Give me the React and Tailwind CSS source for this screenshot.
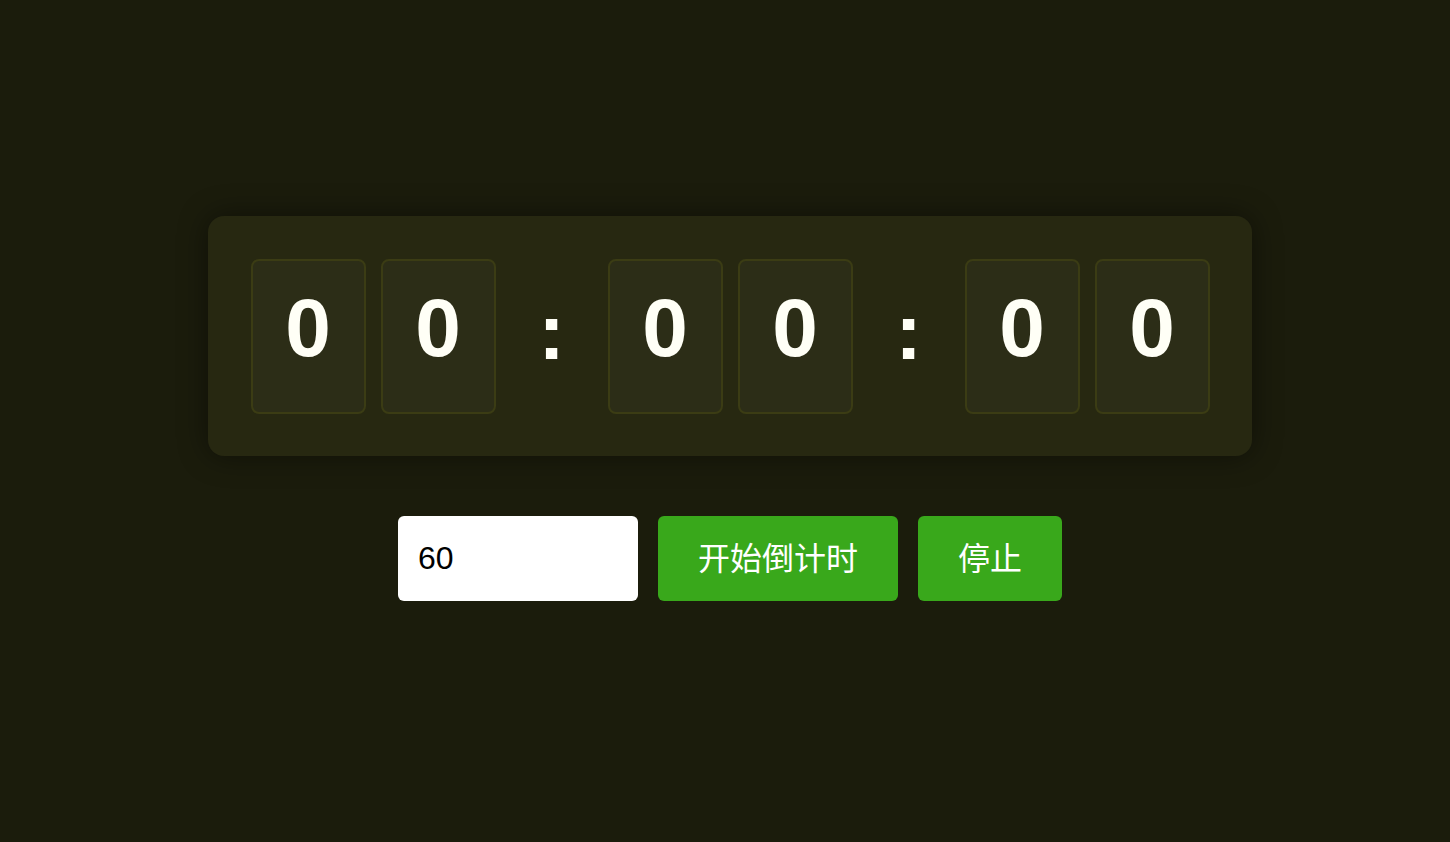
import React, { useState } from "react";

const Card = ({ value }) => (
  <div className="w-[115px] h-[155px] rounded-lg border-2 border-[#3b3c14] bg-[#2c2d17] flex items-center justify-center">
    <span className="text-[82px] font-bold leading-none text-[#fffff6] -mt-4">{value}</span>
  </div>
);

const Colon = () => (
  <div className="w-[82px] flex items-center justify-center">
    <span className="text-[80px] font-bold leading-none text-[#fffff6] -mt-2">:</span>
  </div>
);

const App = () => {
  const [seconds, setSeconds] = useState("60");
  const digits = ["0", "0", "0", "0", "0", "0"];

  return (
    <div
      className="w-full h-screen bg-[#1b1c0c] flex flex-col items-center pt-[216px] pl-[10px]"
      style={{ fontFamily: '"Liberation Sans", Arial, "Noto Sans CJK SC", sans-serif' }}
    >
      <div className="w-[1044px] h-[240px] rounded-2xl bg-[#272811] shadow-[0_0_30px_rgba(0,0,0,0.45)] flex items-center justify-center gap-[15px]">
        <Card value={digits[0]} />
        <Card value={digits[1]} />
        <Colon />
        <Card value={digits[2]} />
        <Card value={digits[3]} />
        <Colon />
        <Card value={digits[4]} />
        <Card value={digits[5]} />
      </div>

      <div className="flex gap-5 mt-[60px]">
        <input
          type="text"
          value={seconds}
          onChange={(e) => setSeconds(e.target.value)}
          className="w-[240px] h-[85px] rounded-md bg-white px-5 text-[32px] text-black outline-none"
        />
        <button className="w-[240px] h-[85px] rounded-md bg-[#39a81b] text-[32px] text-white">
          开始倒计时
        </button>
        <button className="w-[144px] h-[85px] rounded-md bg-[#39a81b] text-[32px] text-white">
          停止
        </button>
      </div>
    </div>
  );
};

export default App;
